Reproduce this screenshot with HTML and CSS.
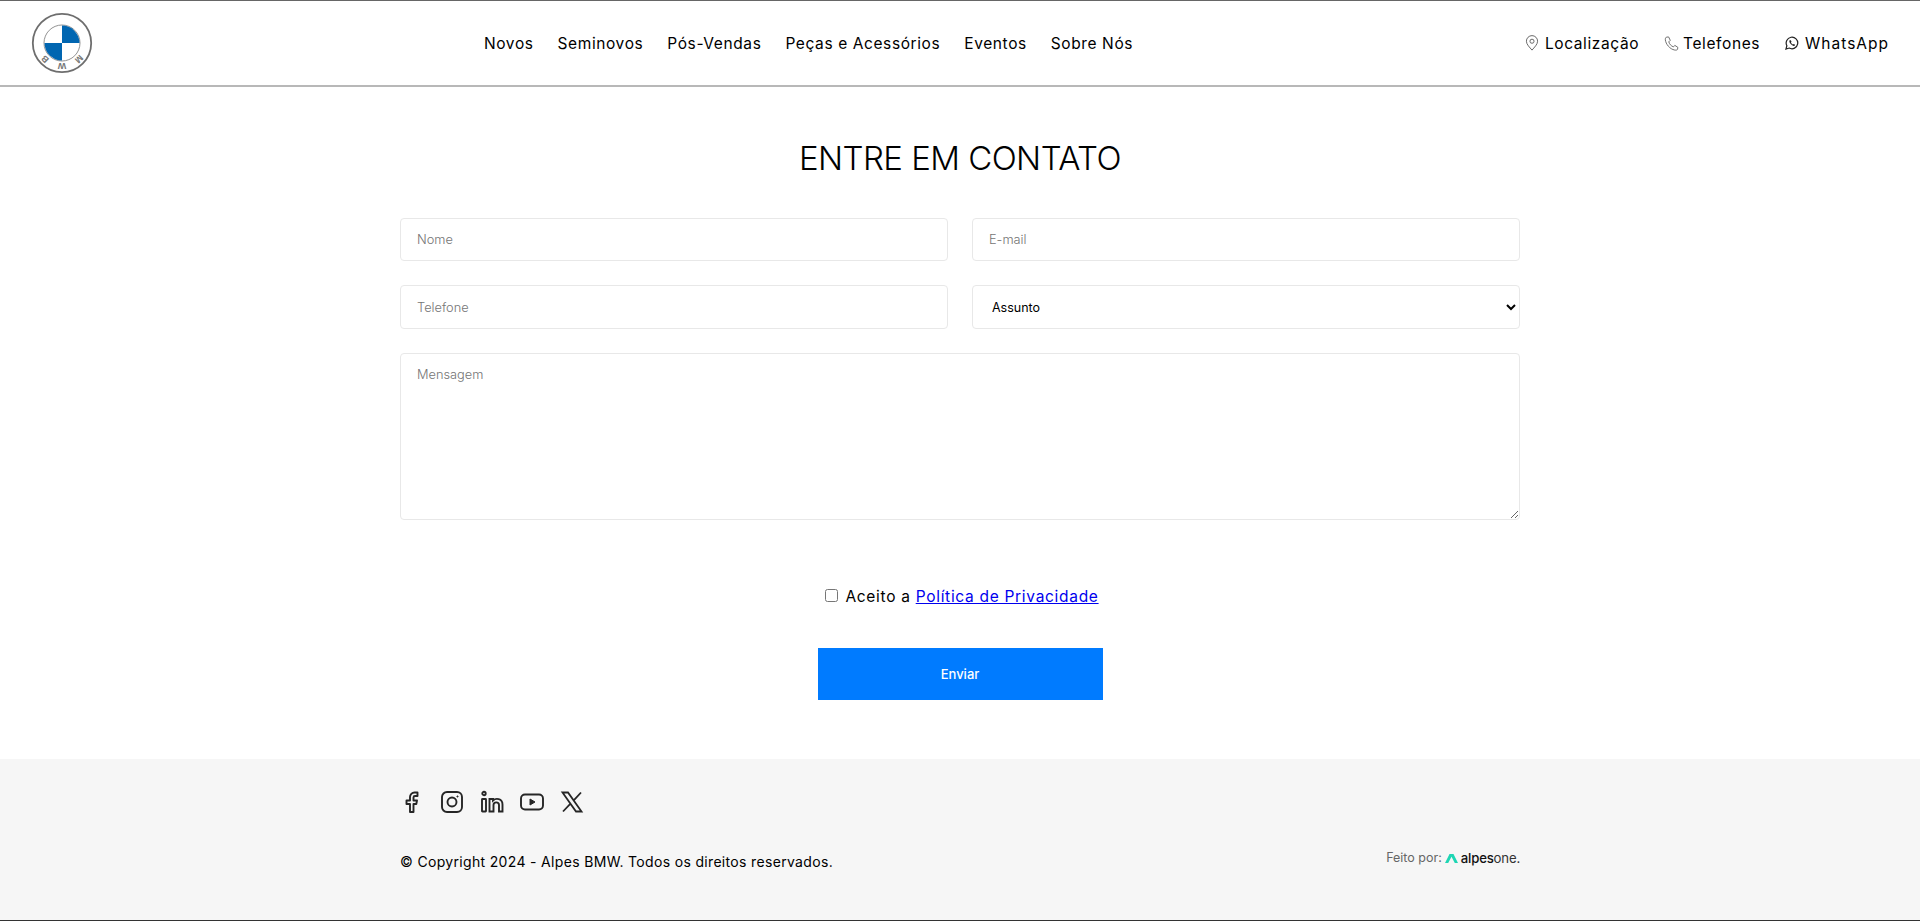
FILE: index.html
```html
<!DOCTYPE html>
<html lang="pt-BR">
<head>
<meta charset="utf-8">
<title>Alpes BMW - Contato</title>
<link rel="stylesheet" href="styles.css">
</head>
<body>
<header class="header">
  <a class="logo" href="#" aria-label="BMW">
    <svg width="62" height="62" viewBox="0 0 62 62">
      <circle cx="31" cy="31" r="29.2" fill="#fff" stroke="#6e6e6e" stroke-width="1.8"/>
      <circle cx="31" cy="31" r="18" fill="#fff" stroke="#777" stroke-width="0.8"/>
      <path d="M31 13.500A17.500 17.500 0 0 1 48.500 31H31Z" fill="#0166b1"/>
      <path d="M31 48.500A17.500 17.500 0 0 1 13.500 31H31Z" fill="#0166b1"/>
      <text class="logo-letter" transform="translate(16.100 44.900) rotate(-135)">B</text>
      <text class="logo-letter" transform="translate(31 51) rotate(180)">W</text>
      <text class="logo-letter" transform="translate(45.900 44.900) rotate(135)">M</text>
    </svg>
  </a>
  <nav class="nav-main">
    <a href="#">Novos</a>
    <a href="#">Seminovos</a>
    <a href="#">Pós-Vendas</a>
    <a href="#">Peças e Acessórios</a>
    <a href="#">Eventos</a>
    <a href="#">Sobre Nós</a>
  </nav>
  <nav class="nav-side">
    <a href="#">
      <svg width="14" height="16" viewBox="0 0 15 18" fill="none" stroke="#666" stroke-width="1.100"><path d="M7.500 17C5 14 1.200 10.600 1.200 7A6.300 6.300 0 0 1 13.800 7C13.800 10.600 10 14 7.500 17Z"/><circle cx="7.500" cy="7" r="2.300"/></svg>
      Localização
    </a>
    <a href="#" class="tel">
      <svg width="15" height="15" viewBox="0 0 15 16" fill="none" stroke="#666" stroke-width="1"><path d="M2 1.200 4.400 1 6.200 4.600 4.600 6.200C5.200 8.600 7.200 10.800 9.600 11.600L11 10 14.200 12 14 14.200C13.600 15 12.400 15.200 11 15 5.600 14 1.400 8.600 .9 4 .8 2.800 1.200 1.800 2 1.200Z"/></svg>
      Telefones
    </a>
    <a href="#" class="wa">
      <svg width="14" height="14" viewBox="0 0 15 15" fill="none" stroke="#222" stroke-width="1.300"><path d="M1 14 2 10.400A6.200 6.200 0 1 1 4.500 12.900Z"/><path d="M5 4.500C4.400 5.200 4.600 6.400 5.500 7.800 6.600 9.400 8.200 10.500 9.600 10.600 10.400 10.500 10.800 10 10.800 9.300L9.300 8.500 8.600 9.200C7.700 8.800 6.800 7.900 6.300 7L7 6.200 6.200 4.500Z" fill="#222" stroke="none"/></svg>
      WhatsApp
    </a>
  </nav>
</header>

<main class="contact">
  <h1 class="title">ENTRE EM CONTATO</h1>
  <form class="form">
    <input class="field" type="text" placeholder="Nome">
    <input class="field" type="text" placeholder="E-mail">
    <input class="field field-tel" type="text" placeholder="Telefone">
    <select class="field field-tel select">
      <option>Assunto</option>
    </select>
    <textarea class="field message" placeholder="Mensagem"></textarea>
    <label class="consent">
      <input class="check" type="checkbox">
      <span>Aceito a <a href="#">Política de Privacidade</a></span>
    </label>
    <button class="submit" type="button">Enviar</button>
  </form>
</main>

<footer class="footer">
  <div class="footer-inner">
    <div class="social">
      <a href="#" aria-label="Facebook"><svg width="24" height="24" viewBox="0 0 24 24" fill="none" stroke="#262626" stroke-width="1.900" stroke-linejoin="round"><path d="M6.500 10.500V14H10V22H13.500V14H16.300L17 10.500H13.500V7.500A1.500 1.500 0 0 1 15 6H17.500V2.500H14.500A4.500 4.500 0 0 0 10 7V10.500Z"/></svg></a>
      <a href="#" aria-label="Instagram"><svg width="24" height="24" viewBox="0 0 24 24" fill="none" stroke="#262626" stroke-width="1.900"><rect x="2" y="2" width="20" height="20" rx="5"/><circle cx="12" cy="12" r="4.500"/><circle cx="17.500" cy="6.500" r=".6" fill="#262626" stroke-width="1"/></svg></a>
      <a href="#" aria-label="LinkedIn"><svg width="24" height="24" viewBox="0 0 24 24" fill="none" stroke="#262626" stroke-width="1.900"><circle cx="4" cy="3.500" r="1.700"/><rect x="2" y="9" width="4" height="12.500" rx=".5"/><path d="M9.500 21.500V9H13V10.500C15.500 8 22.500 8 22.500 14.500V21.500H19V15C19 11.500 13.500 11.500 13.500 15V21.500Z"/></svg></a>
      <a href="#" aria-label="YouTube"><svg width="24" height="24" viewBox="0 0 24 24" fill="none" stroke="#262626" stroke-width="1.900"><rect x="1" y="4.500" width="22" height="15" rx="4"/><path d="M10 9 15 12 10 15Z" fill="#262626" stroke-width="1"/></svg></a>
      <a href="#" aria-label="X"><svg width="24" height="24" viewBox="0 0 24 24" fill="none" stroke="#262626" stroke-width="1.800"><path d="M2.500 2.500H8L21.500 21.500H16ZM21 2.500 13.500 10.700M10.500 13.700 3 21.500"/></svg></a>
    </div>
    <div class="footer-bottom">
      <p class="copy">© Copyright 2024 - Alpes BMW. Todos os direitos reservados.</p>
      <p class="made">Feito por:
        <svg width="13" height="9" viewBox="0 0 13 9"><path d="M0 9 4.500 0H8.500L13 9H9.800L6.500 2.800 3.200 9Z" fill="#1ed6b4"/></svg>
        <span class="brand"><b>alpes</b>one.</span>
      </p>
    </div>
  </div>
</footer>
</body>
</html>
```

FILE: styles.css
```css
* { box-sizing: border-box; }

html, body { height: 100%; }

body {
  margin: 0;
  min-height: 921px;
  display: flex;
  flex-direction: column;
  background: #fff;
  color: #000;
  font-family: "Inter", "Liberation Sans", sans-serif;
  border-bottom: 1px solid #333;
  overflow: hidden;
}

.header {
  height: 87px;
  flex: none;
  display: flex;
  align-items: center;
  padding: 0 31px;
  border-top: 1px solid #666;
  border-bottom: 2px solid #b8b8b8;
}

.header a { color: #000; text-decoration: none; }

.logo { display: flex; width: 62px; height: 62px; }

.logo-letter {
  font: 700 9px "Liberation Sans", sans-serif;
  fill: #777;
  text-anchor: middle;
}

.nav-main {
  display: flex;
  gap: 24px;
  margin-left: 391px;
  font-size: 15.500px;
  letter-spacing: .6px;
}

.nav-side {
  display: flex;
  gap: 25px;
  margin-left: auto;
  font-size: 15.500px;
  letter-spacing: .6px;
}

.nav-side a { display: flex; align-items: center; gap: 6px; }

.nav-side .tel { gap: 4px; }

.nav-side .wa { letter-spacing: 1px; }

.contact { flex: 1; display: flex; flex-direction: column; align-items: center; }

.title {
  margin: 52px 0 0;
  height: 39px;
  font-size: 33px;
  font-weight: 300;
  line-height: 39px;
  letter-spacing: -.55px;
}

.form {
  width: 1120px;
  margin-top: 40px;
  display: grid;
  grid-template-columns: 1fr 1fr;
  column-gap: 24px;
  row-gap: 24px;
}

.field {
  height: 43px;
  padding: 0 16px;
  border: 1px solid #e8e8e8;
  border-radius: 4px;
  background: #fff;
  font: 300 12.800px "Inter", "Liberation Sans", sans-serif;
  color: #000;
  outline: none;
}

.field::placeholder { color: #757575; opacity: 1; }

.field-tel { height: 44px; }

.select { padding-left: 15px; font-size: 12.500px; font-weight: 400; }

.message {
  grid-column: 1 / -1;
  height: 167px;
  padding-top: 13px;
  resize: vertical;
}

.consent {
  grid-column: 1 / -1;
  margin-top: 40px;
  padding-left: 4px;
  display: flex;
  justify-content: center;
  align-items: center;
  gap: 6px;
  height: 24px;
  font-size: 15.500px;
  letter-spacing: .7px;
}

.check { margin: 0 1px 2px 0; width: 13px; height: 13px; }

.consent a { color: #0000ee; }

.submit {
  grid-column: 1 / -1;
  justify-self: center;
  width: 285px;
  height: 52px;
  margin-top: 16px;
  border: 0;
  background: #007bff;
  color: #fff;
  font: 500 13px "Inter", "Liberation Sans", sans-serif;
}

.footer {
  height: 161px;
  flex: none;
  background: #f6f6f6;
}

.footer-inner { width: 1120px; margin: 0 auto; padding-top: 31px; }

.social { display: flex; gap: 16px; }

.social a { display: flex; width: 24px; height: 24px; }

.footer-bottom {
  margin-top: 38px;
  display: flex;
  justify-content: space-between;
  align-items: flex-start;
}

.copy { margin: 0; font-size: 14px; letter-spacing: .33px; line-height: 20px; }

.made {
  margin: 0;
  display: flex;
  align-items: center;
  gap: 3px;
  line-height: 12px;
  font-size: 12.500px;
  color: #666;
}

.brand { color: #333; font-size: 13.200px; letter-spacing: -.2px; }

.brand b { color: #111; font-weight: 500; }
```
